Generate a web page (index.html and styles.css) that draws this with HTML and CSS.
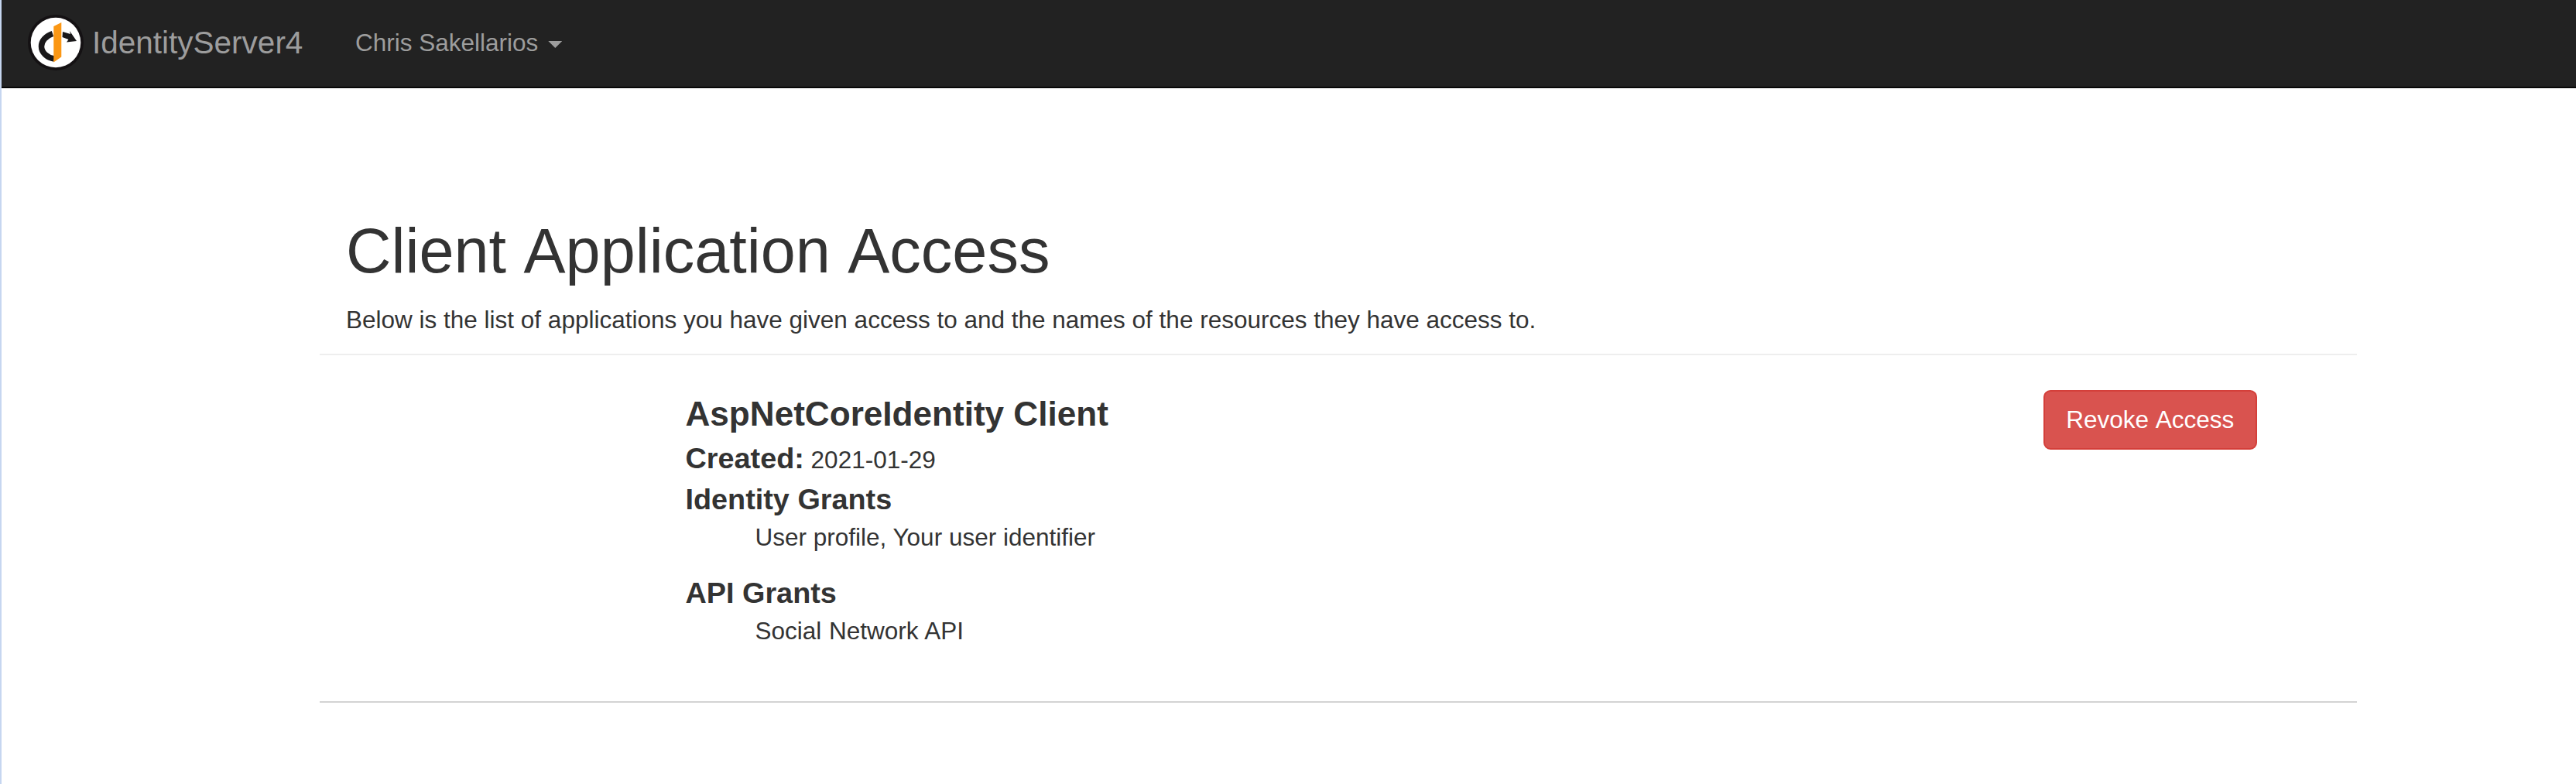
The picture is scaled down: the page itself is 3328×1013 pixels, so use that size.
FILE: index.html
```html
<!DOCTYPE html>
<html lang="en">
<head>
<meta charset="utf-8">
<title>IdentityServer4</title>
<link rel="stylesheet" href="styles.css">
</head>
<body>
<nav class="navbar">
  <a class="brand">
    <svg class="logo" viewBox="0 0 72 72" aria-hidden="true">
      <circle cx="36" cy="36" r="36" fill="#141113"/>
      <circle cx="36" cy="36" r="32.3" fill="#fff"/>
      <path d="M32 24.500C23 27.500 17.500 34 17.500 41C17.500 49 25 55.500 34 57" fill="none" stroke="#1a181a" stroke-width="7.500"/>
      <path d="M45 22L55 25L54 21L63 34L50 35.500L52.500 32L44.500 29Z" fill="#1a181a"/>
      <path d="M33.300 15L43.300 10V54.500L33.300 61.500Z" fill="#fb9714"/>
    </svg>
    <span>IdentityServer4</span>
  </a>
  <a class="user">Chris Sakellarios<span class="caret"></span></a>
</nav>
<main class="container">
  <header class="page-header">
    <h1>Client Application Access</h1>
    <p>Below is the list of applications you have given access to and the names of the resources they have access to.</p>
  </header>
  <section class="grant">
    <div class="details">
      <h2>AspNetCoreIdentity Client</h2>
      <div class="created"><strong>Created:</strong> 2021-01-29</div>
      <dl>
        <dt>Identity Grants</dt>
        <dd>User profile, Your user identifier</dd>
        <dt>API Grants</dt>
        <dd class="api">Social Network API</dd>
      </dl>
    </div>
    <div class="actions"><button class="revoke">Revoke Access</button></div>
  </section>
</main>
</body>
</html>
```
FILE: styles.css
```css
* { box-sizing: border-box; }
body {
  margin: 0;
  min-height: 1013px;
  border-left: 2px solid #c6d6f0;
  background: #fff;
  color: #333;
  font: 31.5px/45px "Liberation Sans", Arial, sans-serif;
}
h1, h2, p, dl, dd { margin: 0; }
.navbar {
  display: flex;
  height: 114px;
  padding-left: 34px;
  background: #222;
  border-bottom: 2px solid #080808;
  color: #9d9d9d;
}
.brand {
  display: flex;
  width: 423px;
  padding-top: 19px;
  font-size: 40.5px;
}
.brand span { padding-top: 14px; }
.logo { width: 72px; height: 72px; margin-right: 11px; }
.user { display: flex; padding-top: 33px; }
.caret {
  width: 18px;
  height: 9px;
  margin: 20px 0 0 13px;
  background: #9d9d9d;
  clip-path: polygon(0 0, 100% 0, 50% 100%);
}
.container { width: 2632px; margin-left: 411px; }
.page-header {
  height: 345px;
  padding: 166px 34px 0;
  border-bottom: 2px solid #eee;
}
h1 {
  margin-bottom: 22px;
  font-size: 81px;
  line-height: 89px;
  font-weight: 400;
  word-spacing: .055em;
}
.grant {
  display: flex;
  height: 449px;
  padding-top: 45px;
  border-bottom: 2px solid #d3d3d3;
}
.details { width: 1755px; margin-left: 438.75px; padding-left: 33.75px; }
h2 { font-size: 44.1px; line-height: 61px; }
.created { height: 53px; line-height: 54px; }
.created strong, dt { font-size: 37.8px; line-height: 54px; font-weight: 700; }
dd { margin: 0 0 22px 90px; }
.api { word-spacing: .028em; }
.actions { padding-left: 33px; }
.revoke {
  display: block;
  width: 276px;
  height: 77px;
  padding: 0;
  border: 2px solid #d43f3a;
  border-radius: 9px;
  background: #d9534f;
  color: #fff;
  font: inherit;
  word-spacing: .055em;
}
```
